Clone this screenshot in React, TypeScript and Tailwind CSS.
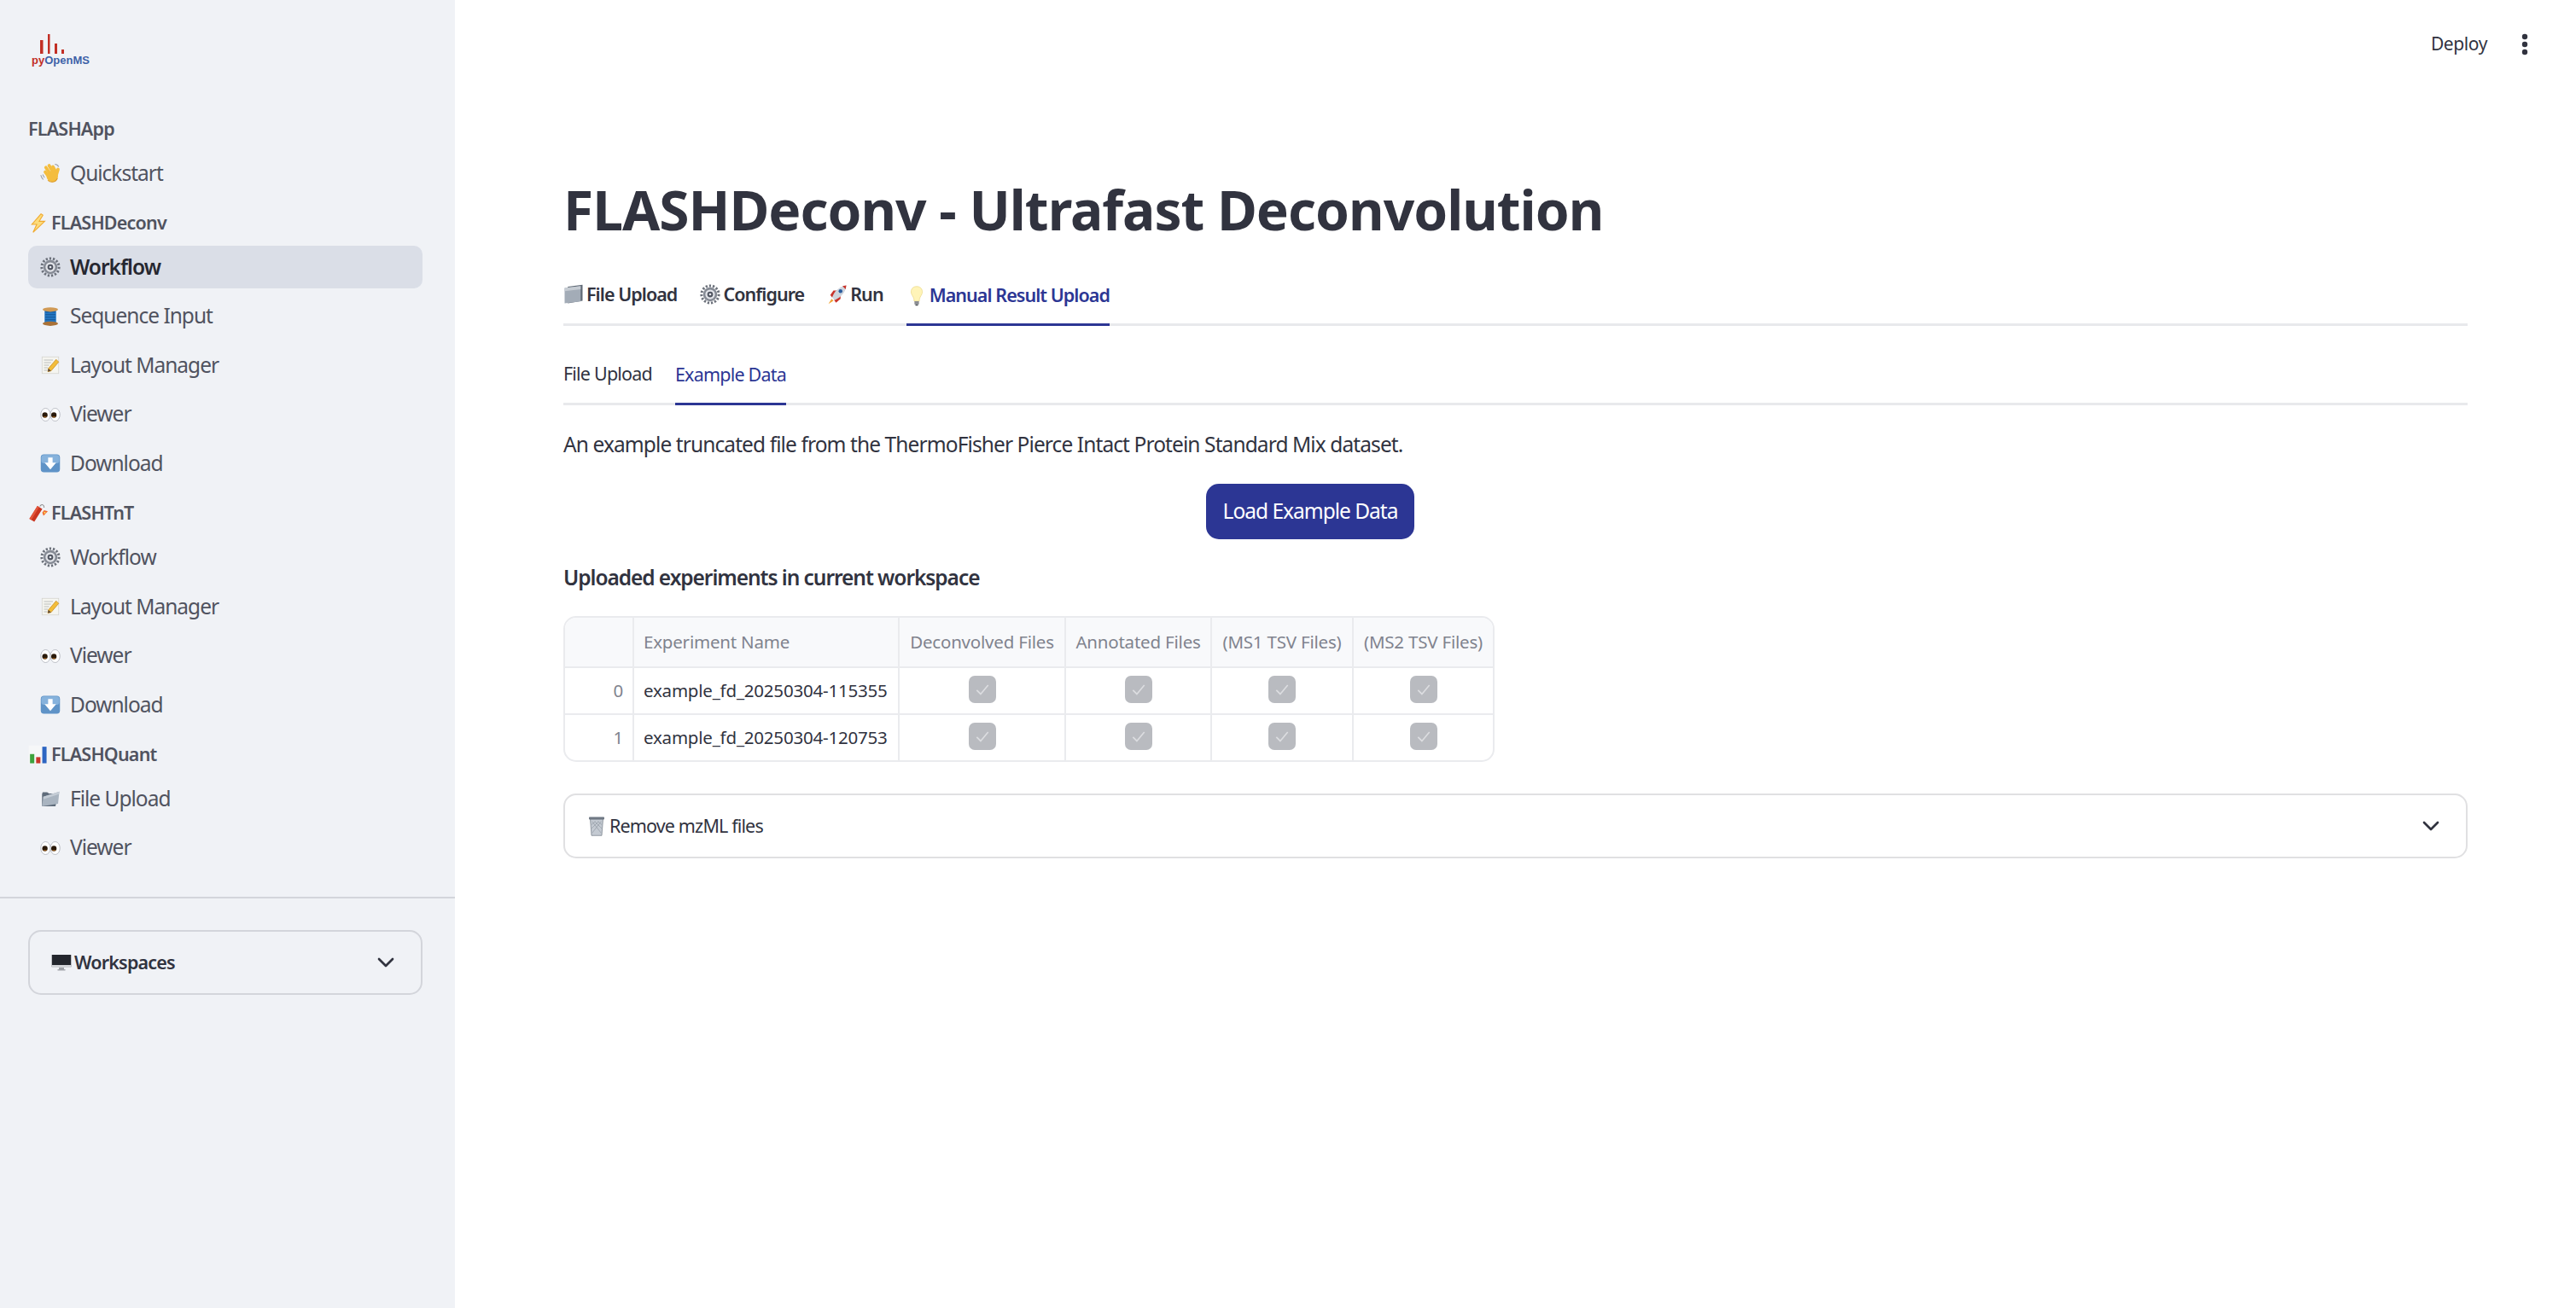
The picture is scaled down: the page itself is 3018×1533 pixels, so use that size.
import { ChevronDown } from "lucide-react";

type EmojiName =
  | "wave" | "bolt" | "gear" | "spool" | "memo" | "eyes" | "down" | "dynamite"
  | "chart" | "folder" | "monitor" | "dividers" | "rocket" | "bulb" | "trash";

// no emoji font in the sandbox, so these are small drawings
function Emoji({ name, size = 24 }: { name: EmojiName; size?: number }) {
  return (
    <svg width={size} height={size} viewBox="0 0 32 32" className="shrink-0">
      {name === "wave" && (
        <g>
          <g stroke="#f4bd3e" strokeWidth="5" strokeLinecap="round" fill="none">
            <path d="M8 14 L14 22" />
            <path d="M9 7 L17 19" />
            <path d="M14 4 L21 16" />
            <path d="M20 6 L25 15" />
            <path d="M28 10 L25 20" />
          </g>
          <ellipse cx="19" cy="21" rx="9" ry="8.5" fill="#f4bd3e" />
          <path d="M12 27 C16 31 24 31 27 24" stroke="#dc9a2a" strokeWidth="1.4" fill="none" />
          <path d="M23 2 C26 2 28 4 29 6 M1 19 C2 22 3 24 5 26 M4 18 C5 20 6 22 7 23" stroke="#9aa0ac" strokeWidth="1.4" fill="none" />
        </g>
      )}
      {name === "bolt" && (
        <path d="M21 1 L6 18 L14 18 L8 31 L27 13 L18 13 L24 3 Z" fill="#fcdc7c" stroke="#f0a92e" strokeWidth="1.5" />
      )}
      {name === "gear" && (
        <g>
          <circle cx="16" cy="16" r="11" fill="#868b95" />
          <circle cx="16" cy="16" r="13.5" fill="none" stroke="#6c717b" strokeWidth="4" strokeDasharray="3 2.6" />
          <circle cx="16" cy="16" r="7.5" fill="#e3e5ea" />
          <circle cx="16" cy="16" r="4.5" fill="#4f5460" />
          <circle cx="16" cy="16" r="1.8" fill="#e4e6ea" />
        </g>
      )}
      {name === "spool" && (
        <g>
          <rect x="7" y="5" width="18" height="22" fill="#2478c4" />
          <path d="M8 9 H24 M8 13 H24 M8 17 H24 M8 21 H24" stroke="#144f8d" strokeWidth="1.2" />
          <ellipse cx="16" cy="5" rx="12" ry="3.5" fill="#d09a55" />
          <ellipse cx="16" cy="27" rx="12" ry="3.5" fill="#a97137" />
        </g>
      )}
      {name === "memo" && (
        <g>
          <rect x="3" y="3" width="26" height="26" fill="#f5f5f0" stroke="#d2d2cc" strokeWidth="1" />
          <path d="M6 8 H20 M6 12 H17 M6 16 H14 M6 20 H12 M6 24 H11" stroke="#a9abab" strokeWidth="1" />
          <path d="M12 26 L13 21 L25 7 L29 11 L17 25 Z" fill="#f3bd38" stroke="#c58a22" strokeWidth="1" />
          <path d="M12 26 L13 21 L17 25 Z" fill="#5b4a3a" />
        </g>
      )}
      {name === "eyes" && (
        <g>
          <ellipse cx="8.5" cy="16" rx="7.5" ry="10" fill="#fff" stroke="#b4b8c0" strokeWidth="1.2" />
          <ellipse cx="23.5" cy="16" rx="7.5" ry="10" fill="#fff" stroke="#b4b8c0" strokeWidth="1.2" />
          <circle cx="7.5" cy="16.5" r="4.2" fill="#2a1a0a" />
          <circle cx="21.5" cy="16.5" r="4.2" fill="#2a1a0a" />
          <path d="M4.5 19 A4.2 4.2 0 0 0 11 19 Z" fill="#a8641d" />
          <path d="M18.5 19 A4.2 4.2 0 0 0 25 19 Z" fill="#a8641d" />
        </g>
      )}
      {name === "down" && (
        <g>
          <rect x="1" y="2" width="30" height="28" rx="5" fill="#5f93c7" />
          <rect x="2" y="3" width="28" height="13" rx="4" fill="#86b2dc" />
          <path d="M12.5 7 H19.5 V15 H25 L16 25.5 L7 15 H12.5 Z" fill="#fff" />
        </g>
      )}
      {name === "dynamite" && (
        <g>
          <path d="M2 25 L15 4 L23 9 L10 30 Z" fill="#c9341f" />
          <path d="M2 25 L15 4 L18 6 L5 27 Z" fill="#e2563b" />
          <path d="M19 5 C22 0 26 2 26 7" stroke="#8b8b8b" strokeWidth="1.4" fill="none" />
          <path d="M26 11 L32 13 L28 17 L25 20 L23 15 Z" fill="#f06a2d" />
          <circle cx="27" cy="15" r="1.6" fill="#fdd65f" />
        </g>
      )}
      {name === "chart" && (
        <g>
          <rect x="1" y="1" width="30" height="30" fill="#f6f7f8" />
          <rect x="3" y="15" width="7" height="15" fill="#3da23d" />
          <rect x="13" y="20" width="7" height="10" fill="#c9352a" />
          <rect x="23" y="3" width="7" height="27" fill="#2d65c2" />
        </g>
      )}
      {name === "folder" && (
        <g>
          <path d="M3 9 L3 28 L24 28 L28 8 L14 8 L11 6 L4 6 Z" fill="#5f6c7b" />
          <path d="M5 13 L30 5 L28 24 L3 28 Z" fill="#a9b4c0" />
          <path d="M5 13 L30 5 L29.5 9 L5 17 Z" fill="#c4ccd5" />
        </g>
      )}
      {name === "dividers" && (
        <g>
          <path d="M7 4 L30 1 L30 26 L7 30 Z" fill="#5f6975" />
          <path d="M2 6 L27 3 L27 27 L2 30 Z" fill="#a3acb7" />
          <path d="M2 6 L27 3 L27 8 L2 11 Z" fill="#c6ccd3" />
        </g>
      )}
      {name === "monitor" && (
        <g>
          <rect x="1" y="4" width="30" height="19" fill="#23262d" />
          <rect x="1" y="20" width="30" height="4" fill="#d3d5d9" />
          <rect x="12" y="24" width="8" height="3" fill="#a0a3a9" />
          <rect x="10" y="27" width="12" height="1.5" fill="#8b8e95" />
        </g>
      )}
      {name === "rocket" && (
        <g>
          <path d="M7 23 L2 31 L10 26 Z" fill="#f2a230" />
          <path d="M5 17 L10 10 L16 10 L8 21 Z" fill="#c9332b" />
          <path d="M11 25 L21 17 L21 23 L14 29 Z" fill="#c9332b" />
          <path d="M8 21 C11 11 19 4 30 2 C29 13 22 20 12 25 Z" fill="#cfd5dd" />
          <circle cx="21" cy="11" r="3" fill="#2b5c9e" />
          <path d="M24 3 L30 2 L29 8 Z" fill="#c9332b" />
        </g>
      )}
      {name === "bulb" && (
        <g>
          <path d="M16 1 C8 1 6 8 8 13 C10 17 12 19 12 24 L20 24 C20 19 22 17 24 13 C26 8 24 1 16 1 Z" fill="#fff4b8" stroke="#ecd98a" strokeWidth="1" />
          <rect x="12.5" y="24" width="7" height="5" fill="#8b8d92" />
          <rect x="14" y="29" width="4" height="2" fill="#4d4f55" />
        </g>
      )}
      {name === "trash" && (
        <g>
          <path d="M6 5 H26 L24 31 H8 Z" fill="#c4cad2" stroke="#79818c" strokeWidth="1" />
          <path d="M9 9 L23 27 M13 9 L24 20 M18 9 L24 14 M23 9 L9 27 M19 9 L8 20 M14 9 L8 14" stroke="#8b939e" strokeWidth="0.8" />
          <rect x="4" y="2" width="24" height="4" rx="1" fill="#6f7884" />
        </g>
      )}
    </svg>
  );
}

const groups: { label: string; icon?: EmojiName; items: { icon: EmojiName; text: string; active?: boolean }[] }[] = [
  { label: "FLASHApp", items: [{ icon: "wave", text: "Quickstart" }] },
  {
    label: "FLASHDeconv",
    icon: "bolt",
    items: [
      { icon: "gear", text: "Workflow", active: true },
      { icon: "spool", text: "Sequence Input" },
      { icon: "memo", text: "Layout Manager" },
      { icon: "eyes", text: "Viewer" },
      { icon: "down", text: "Download" },
    ],
  },
  {
    label: "FLASHTnT",
    icon: "dynamite",
    items: [
      { icon: "gear", text: "Workflow" },
      { icon: "memo", text: "Layout Manager" },
      { icon: "eyes", text: "Viewer" },
      { icon: "down", text: "Download" },
    ],
  },
  {
    label: "FLASHQuant",
    icon: "chart",
    items: [
      { icon: "folder", text: "File Upload" },
      { icon: "eyes", text: "Viewer" },
    ],
  },
];

function Sidebar() {
  return (
    <aside className="w-[533px] shrink-0 bg-[#f0f2f6]">
      <div className="pl-[33px] pr-[38px] pt-[38px] pb-[32px] border-b-2 border-[#d3d5db]">
        <div className="h-[39px] pl-[4px] w-[90px]">
          <svg width="40" height="26" viewBox="0 0 40 26" className="ml-[7px]">
            <rect x="3" y="9" width="3.5" height="16" fill="#c22f25" />
            <rect x="12" y="2" width="2.5" height="23" fill="#c22f25" />
            <rect x="20" y="13" width="3" height="12" fill="#c22f25" />
            <rect x="28" y="20" width="3" height="5" fill="#c22f25" />
          </svg>
          <div className="font-['Liberation_Sans',sans-serif] font-bold text-[13px] leading-[13px] tracking-[0px]">
            <span className="text-[#c22f25]">py</span>
            <span className="text-[#3d62a8]">OpenMS</span>
          </div>
        </div>
        <div className="mt-[60px] flex flex-col gap-[19px]">
          {groups.map((g) => (
            <div key={g.label}>
              <div className="h-[28px] mb-[13px] flex items-center gap-[4px] text-[21.5px] font-semibold text-[#50535f] tracking-[-0.8px]">
                {g.icon && <Emoji name={g.icon} size={23} />}
                <span>{g.label}</span>
              </div>
              <div className="flex flex-col gap-[7.6px]">
                {g.items.map((it, i) => (
                  <div
                    key={i}
                    className={
                      it.active
                        ? "h-[50px] rounded-[10px] bg-[#dadee7] pl-[14px] flex items-center gap-[11px] text-[24.5px] font-semibold text-[#262730] tracking-[-1px]"
                        : "h-[50px] rounded-[10px] pl-[14px] flex items-center gap-[11px] text-[24.5px] text-[#50535f] tracking-[-1px]"
                    }
                  >
                    <Emoji name={it.icon} />
                    <span>{it.text}</span>
                  </div>
                ))}
              </div>
            </div>
          ))}
        </div>
      </div>
      <div className="pl-[33px] pr-[38px] pt-[37px]">
        <div className="h-[76px] rounded-[15px] border-2 border-[#d3d5db] flex items-center justify-between pl-[25px] pr-[25px]">
          <div className="flex items-center gap-[3px] text-[21.5px] font-semibold text-[#31333f] tracking-[-0.8px]">
            <Emoji name="monitor" size={24} />
            <span>Workspaces</span>
          </div>
          <ChevronDown size={32} strokeWidth={2} className="text-[#31333f]" />
        </div>
      </div>
    </aside>
  );
}

const columns = ["Deconvolved Files", "Annotated Files", "(MS1 TSV Files)", "(MS2 TSV Files)"];
const rows = ["example_fd_20250304-115355", "example_fd_20250304-120753"];

function CheckBox() {
  return (
    <div className="w-[32px] h-[32px] rounded-[7px] bg-[#b9bbc0] flex items-center justify-center">
      <svg width="20" height="20" viewBox="0 0 24 24" fill="none" stroke="#dcdde0" strokeWidth="2">
        <path d="M4 13 L9.5 18.5 L20 6" />
      </svg>
    </div>
  );
}

function ExperimentsTable() {
  return (
    <div className="mt-[30px] w-[1091px] rounded-[15px] border-2 border-[#eaebee] overflow-hidden text-[#31333f] text-[20.5px] tracking-[-0.2px]">
      <div className="grid grid-cols-[81px_311px_195px_171px_166px_1fr] h-[57px] bg-[#f8f9fb] text-[#80838e]">
        <div className="border-r-2 border-[#eaebee]" />
        <div className="border-r-2 border-[#eaebee] flex items-center pl-[11px]">Experiment Name</div>
        {columns.map((c, i) => (
          <div key={c} className={i < 3 ? "border-r-2 border-[#eaebee] flex items-center justify-center whitespace-nowrap" : "flex items-center justify-center whitespace-nowrap"}>
            {c}
          </div>
        ))}
      </div>
      {rows.map((r, ri) => (
        <div key={r} className="grid grid-cols-[81px_311px_195px_171px_166px_1fr] h-[55px] border-t-2 border-[#eaebee]">
          <div className="border-r-2 border-[#eaebee] flex items-center justify-end pr-[11px] text-[#80838e]">{ri}</div>
          <div className="border-r-2 border-[#eaebee] flex items-center pl-[11px] whitespace-nowrap">{r}</div>
          {columns.map((c, i) => (
            <div key={c} className={i < 3 ? "border-r-2 border-[#eaebee] flex items-center justify-center pb-[4px]" : "flex items-center justify-center pb-[4px]"}>
              <CheckBox />
            </div>
          ))}
        </div>
      ))}
    </div>
  );
}

export default function App() {
  return (
    <div className="flex h-[1533px] overflow-hidden bg-white font-['Noto_Sans',sans-serif]">
      <Sidebar />
      <main className="flex-1 min-w-0">
        <div className="h-[104px] flex items-center justify-end pr-[56px] gap-[40px] text-[#31333f]">
          <span className="text-[21px] tracking-[-0.4px]">Deploy</span>
          <svg width="8" height="26" viewBox="0 0 8 26" fill="#31333f">
            <circle cx="4" cy="4" r="3.2" />
            <circle cx="4" cy="13" r="3.2" />
            <circle cx="4" cy="22" r="3.2" />
          </svg>
        </div>
        <div className="px-[127px]">
          <h1 className="mt-[98px] h-[88px] flex items-center text-[64px] font-bold leading-none text-[#31333f] tracking-[-1px] whitespace-nowrap">
            FLASHDeconv - Ultrafast Deconvolution
          </h1>
          <div className="h-[92px] border-b-[3px] border-[#e8e9ec] flex items-end gap-[27px] text-[21.5px] font-semibold text-[#31333f] tracking-[-0.95px]">
            <div className="h-[68px] flex items-center gap-[3px]"><Emoji name="dividers" size={24} />File Upload</div>
            <div className="h-[68px] flex items-center gap-[3px]"><Emoji name="gear" size={24} />Configure</div>
            <div className="h-[68px] flex items-center gap-[3px]"><Emoji name="rocket" size={24} />Run</div>
            <div className="h-[68px] -mb-[3px] flex items-center gap-[3px] border-b-[3px] border-[#2c3694] text-[#2c3694]"><Emoji name="bulb" size={24} />Manual Result Upload</div>
          </div>
          <div className="h-[93px] border-b-[3px] border-[#e8e9ec] flex items-end gap-[27px] text-[21.5px] text-[#31333f] tracking-[-0.8px]">
            <div className="h-[68px] flex items-center">File Upload</div>
            <div className="h-[68px] -mb-[3px] flex items-center border-b-[3px] border-[#2c3694] text-[#2c3694]">Example Data</div>
          </div>
          <p className="mt-[31px] h-[30px] text-[24.5px] leading-[30px] text-[#31333f] tracking-[-0.9px]">
            An example truncated file from the ThermoFisher Pierce Intact Protein Standard Mix dataset.
          </p>
          <button className="block mt-[31px] ml-[753px] w-[244px] h-[65px] rounded-[15px] bg-[#2c3694] text-white text-[24.5px] tracking-[-1px]">Load Example Data</button>
          <h3 className="mt-[30px] h-[30px] leading-[30px] text-[24.5px] font-semibold text-[#31333f] tracking-[-1.06px]">
            Uploaded experiments in current workspace
          </h3>
          <ExperimentsTable />
          <div className="mt-[37px] h-[76px] rounded-[15px] border-2 border-[#e0e0e2] flex items-center justify-between pl-[25px] pr-[25px] text-[21.5px] text-[#31333f] tracking-[-0.85px]">
            <div className="flex items-center gap-[3px]"><Emoji name="trash" size={24} />Remove mzML files</div>
            <ChevronDown size={32} strokeWidth={2} />
          </div>
        </div>
      </main>
    </div>
  );
}
